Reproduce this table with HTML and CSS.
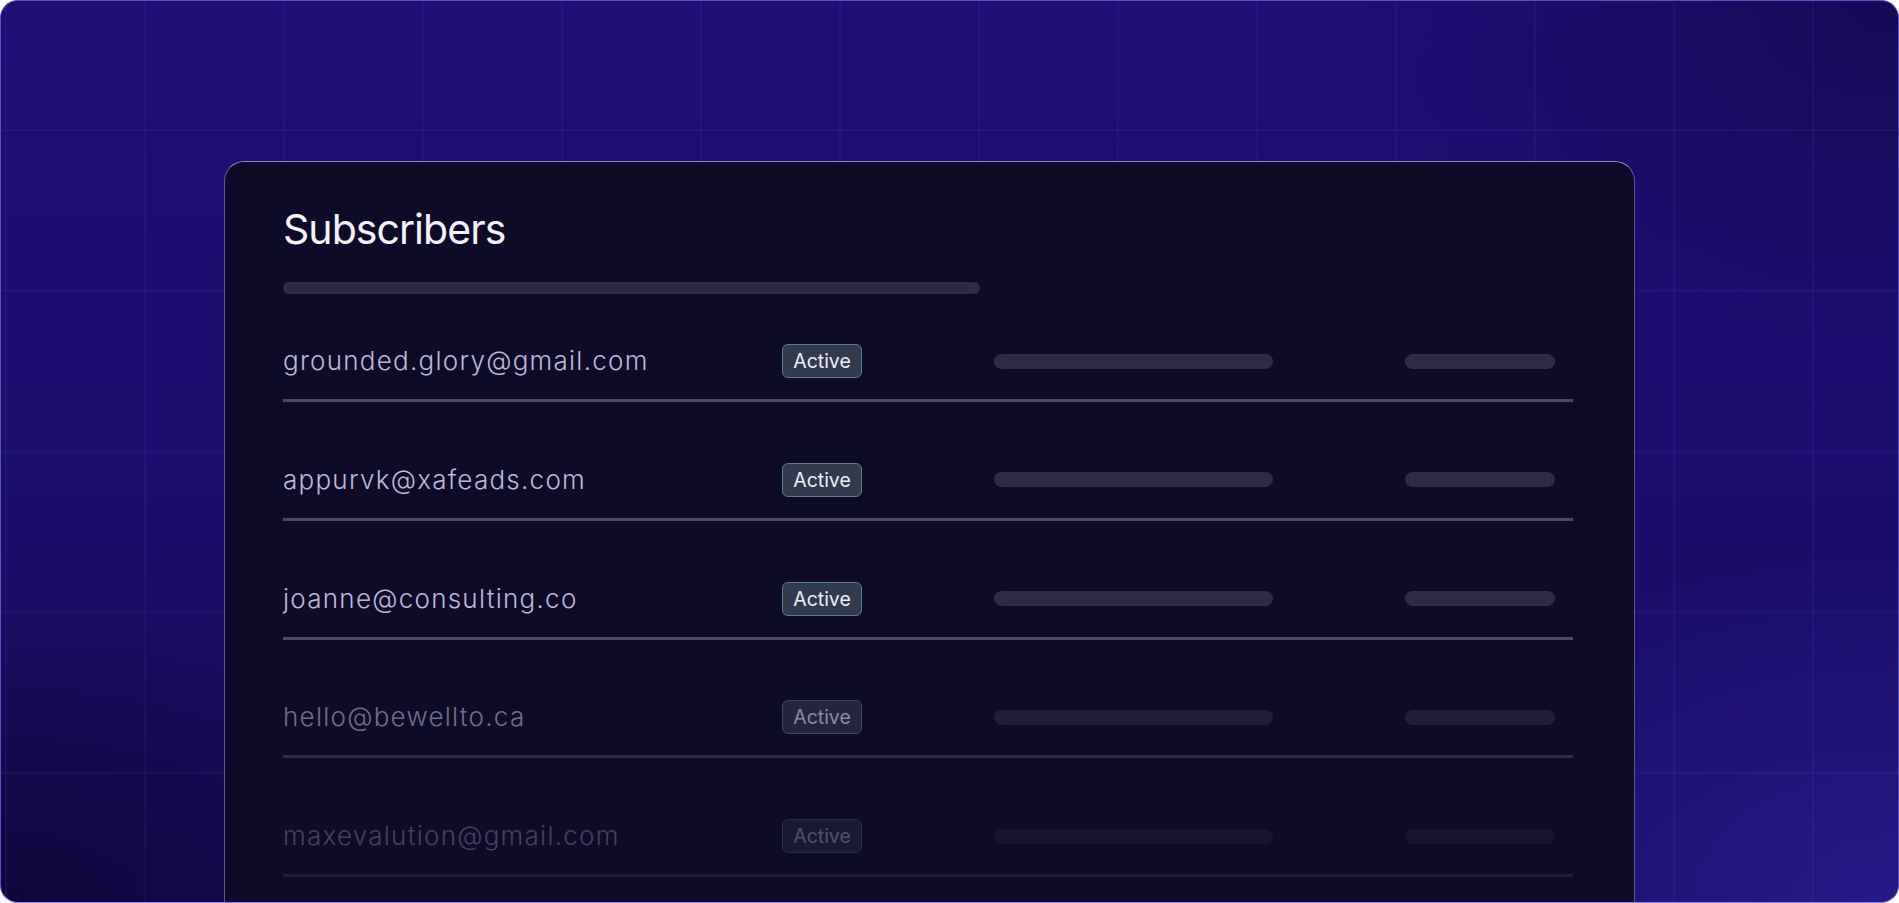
FILE: index.html
```html
<!DOCTYPE html>
<html lang="en">
<head>
<meta charset="utf-8">
<title>Subscribers</title>
<link rel="stylesheet" href="styles.css">
</head>
<body>
<div class="frame">
  <section class="card">
    <h1 class="title">Subscribers</h1>
    <div class="skeleton header-bar"></div>
    <ul class="rows">
      <li class="row">
        <span class="email">grounded.glory@gmail.com</span>
        <span class="badge">Active</span>
        <span class="skeleton bar-long"></span>
        <span class="skeleton bar-short"></span>
      </li>
      <li class="row">
        <span class="email">appurvk@xafeads.com</span>
        <span class="badge">Active</span>
        <span class="skeleton bar-long"></span>
        <span class="skeleton bar-short"></span>
      </li>
      <li class="row">
        <span class="email">joanne@consulting.co</span>
        <span class="badge">Active</span>
        <span class="skeleton bar-long"></span>
        <span class="skeleton bar-short"></span>
      </li>
      <li class="row row-fade">
        <span class="email">hello@bewellto.ca</span>
        <span class="badge">Active</span>
        <span class="skeleton bar-long"></span>
        <span class="skeleton bar-short"></span>
      </li>
      <li class="row row-faint">
        <span class="email">maxevalution@gmail.com</span>
        <span class="badge">Active</span>
        <span class="skeleton bar-long"></span>
        <span class="skeleton bar-short"></span>
      </li>
    </ul>
  </section>
</div>
</body>
</html>
```

FILE: styles.css
```css
* { box-sizing: border-box; }

html, body {
  margin: 0;
  padding: 0;
  background: #ffffff;
}

body {
  font-family: "Inter", "Liberation Sans", sans-serif;
}

.frame {
  width: 100vw;
  height: 100vh;
  border-radius: 18px;
  border: 1.5px solid #5a52c4;
  border-bottom-color: #8a84ec;
  overflow: hidden;
  padding: 160px 263px 0 223px;
  background-color: #1a0d68;
  background-image:
    linear-gradient(90deg, rgba(140, 125, 255, 0.06) 0 2px, transparent 2px),
    linear-gradient(180deg, rgba(140, 125, 255, 0.06) 0 2px, transparent 2px),
    radial-gradient(ellipse 900px 500px at 100% 100%, rgba(44, 30, 150, 0.75), transparent 70%),
    radial-gradient(ellipse 800px 500px at 100% 0%, rgba(14, 6, 60, 0.55), transparent 70%),
    radial-gradient(ellipse 800px 450px at 0% 100%, rgba(12, 6, 50, 0.8), transparent 75%),
    linear-gradient(180deg, #1e0f75 0%, #1b0e6c 50%, #170c5e 100%);
  background-size:
    139px 160.75px,
    139px 160.75px,
    100% 100%,
    100% 100%,
    100% 100%,
    100% 100%;
  background-position:
    143px 128px,
    143px 128px,
    0 0, 0 0, 0 0, 0 0;
  background-repeat:
    repeat, repeat, no-repeat, no-repeat, no-repeat, no-repeat;
}

.card {
  background: #0e0b28;
  border: 1.5px solid #5c5886;
  border-top-color: #8e89b8;
  border-radius: 20px;
  padding: 47px 61px 60px 58px;
  min-height: 800px;
}

.title {
  margin: 0;
  font-weight: 400;
  font-size: 41px;
  line-height: 41px;
  color: #f3f2fb;
  letter-spacing: -0.95px;
}

.skeleton {
  display: block;
  background: #2d2b46;
  border-radius: 8px;
}

.header-bar {
  width: 697px;
  height: 12px;
  margin-top: 32px;
  border-radius: 6px;
}

.rows {
  list-style: none;
  margin: 50px 0 0;
  padding: 0;
  display: flex;
  flex-direction: column;
  gap: 60.75px;
}

.row {
  display: grid;
  grid-template-columns: 499px 212px 411px 150px;
  align-items: center;
  padding-bottom: 21px;
  border-bottom: 3px solid #4b4869;
}

.email {
  font-size: 26px;
  font-weight: 300;
  color: #bcb9da;
  line-height: 34px;
  letter-spacing: 1.25px;
}

.badge {
  width: 80px;
  height: 34px;
  display: flex;
  align-items: center;
  justify-content: center;
  background: #323a4f;
  border: 1.5px solid #5b7f7e;
  border-radius: 6px;
  color: #eeeef5;
  font-size: 19.5px;
}

.bar-long {
  width: 279px;
  height: 15px;
}

.bar-short {
  width: 150px;
  height: 15px;
}

.row-fade { opacity: 0.56; }
.row-faint { opacity: 0.3; }
```
